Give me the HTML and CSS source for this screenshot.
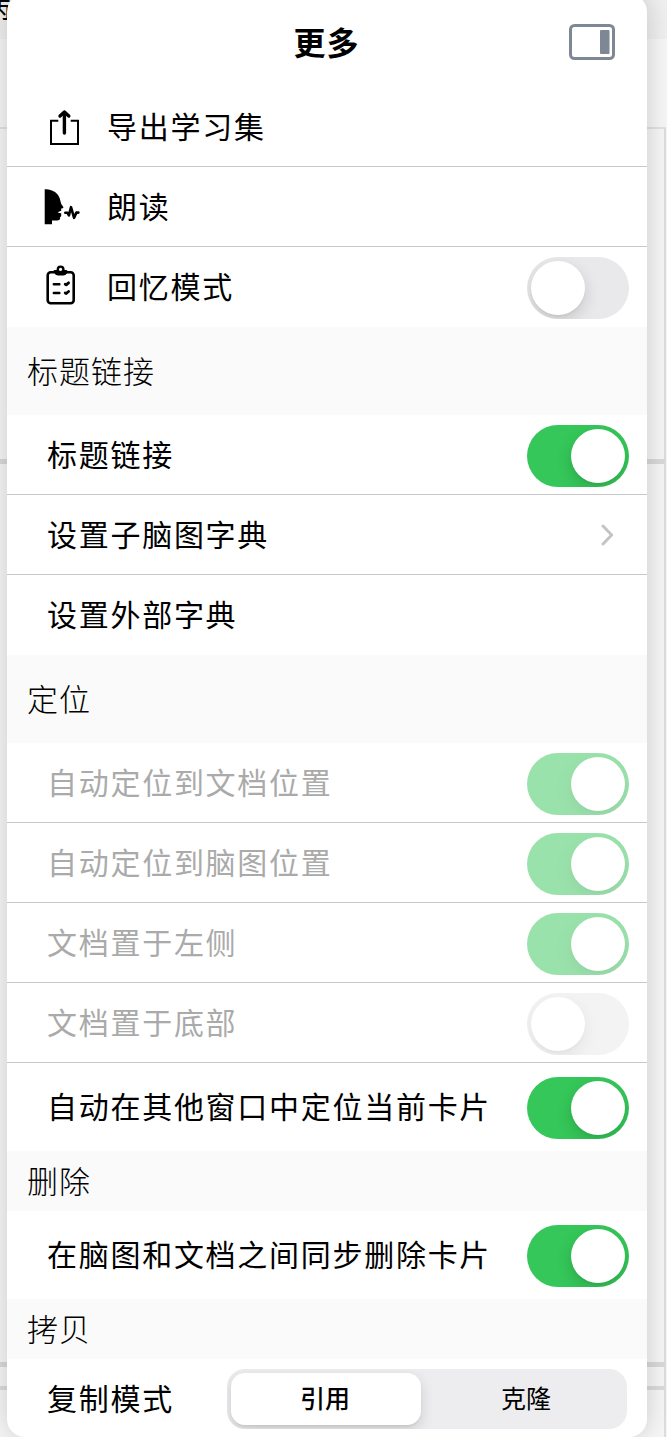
FILE: index.html
```html
<!DOCTYPE html>
<html lang="zh-CN">
<head>
<meta charset="utf-8">
<title>更多</title>
<link rel="stylesheet" href="styles.css">
</head>
<body>
<div class="screen">
  <div class="backdrop">
    <div class="bd-toolbar"><span class="bd-text">病</span></div>
    <div class="bd-tabs"></div>
    <div class="bd-page bd-page-first"></div>
    <div class="bd-page bd-page-main"></div>
    <div class="bd-page bd-page-gap"></div>
    <div class="bd-page bd-page-last"></div>
  </div>
  <main class="panel">
    <header class="header">
      <h1 class="title">更多</h1>
      <svg class="dock" width="46" height="36" viewBox="0 0 46 36"><rect x="1.5" y="1.5" width="43" height="33" rx="4" fill="none" stroke="#7e8796" stroke-width="3"/><rect x="31" y="6" width="9.5" height="24" rx="1" fill="#7e8796"/></svg>
    </header>

    <div class="row icon-row">
      <svg class="icon" width="40" height="40" viewBox="0 0 40 40" fill="none" stroke="#000"><path d="M15.3 13.7H8V37h27V13.7h-7.3" stroke-width="2"/><path d="M21.4 26V5.5" stroke-width="3.4" stroke-linecap="round"/><path d="M17 9l4.4-4 4.4 4" stroke-width="3.4" stroke-linecap="round" stroke-linejoin="round"/></svg>
      <span class="label">导出学习集</span>
    </div>
    <div class="row icon-row">
      <svg class="icon" width="40" height="40" viewBox="0 0 40 40"><path d="M1.7 2.3C10 1.8 16.5 7 17.4 14q.2 3 3.1 6.2-.2 1.2-2.3 1.4v2.2l-3.6 1.4q1.5 1 3.6 1.1v2.9l-1.2 1 .2 1.2q-.3 2.1-2.9 2.1H9V37.3H1.7z"/><path d="M22.3 25.8h2.2l1.4 2.6 2.1-8.2 3.1 10.6 2.3-5.2h2" fill="none" stroke="#000" stroke-width="2.6" stroke-linecap="round" stroke-linejoin="round"/></svg>
      <span class="label">朗读</span>
    </div>
    <div class="row icon-row last">
      <svg class="icon" width="40" height="40" viewBox="0 0 40 40" fill="none" stroke="#000" stroke-linecap="round" stroke-linejoin="round"><rect x="4.7" y="5.2" width="26" height="31" rx="3" stroke-width="2.6"/><path d="M11.5 3.5h12.3v1.7q-.6 2.8-3.2 2.8h-5.9q-2.6 0-3.2-2.8z" fill="#000" stroke-width="1"/><circle cx="17.6" cy="2.4" r="2.8" fill="#fff" stroke-width="2.4"/><path d="M10.8 17.3h5.6M10.8 26h5.6" stroke-width="2.4"/><path d="M22.2 17.3l1 .5 2.4-2M22.2 26l1 .5 2.4-2" stroke-width="2.8"/></svg>
      <span class="label">回忆模式</span>
      <span class="switch"><i class="knob"></i></span>
    </div>

    <h2 class="section">标题链接</h2>
    <div class="row"><span class="label">标题链接</span><span class="switch on"><i class="knob"></i></span></div>
    <div class="row"><span class="label">设置子脑图字典</span><svg class="chevron" width="16" height="24" viewBox="0 0 16 24"><path d="M3 3l8.7 9L3 21" fill="none" stroke="#c4c4c6" stroke-width="3" stroke-linecap="round" stroke-linejoin="round"/></svg></div>
    <div class="row last"><span class="label">设置外部字典</span></div>

    <h2 class="section">定位</h2>
    <div class="row disabled"><span class="label">自动定位到文档位置</span><span class="switch on"><i class="knob"></i></span></div>
    <div class="row disabled"><span class="label">自动定位到脑图位置</span><span class="switch on"><i class="knob"></i></span></div>
    <div class="row disabled"><span class="label">文档置于左侧</span><span class="switch on"><i class="knob"></i></span></div>
    <div class="row disabled"><span class="label">文档置于底部</span><span class="switch"><i class="knob"></i></span></div>
    <div class="row tall last"><span class="label">自动在其他窗口中定位当前卡片</span><span class="switch on"><i class="knob"></i></span></div>

    <h2 class="section compact">删除</h2>
    <div class="row tall last"><span class="label">在脑图和文档之间同步删除卡片</span><span class="switch on"><i class="knob"></i></span></div>

    <h2 class="section compact">拷贝</h2>
    <div class="row last copy-row">
      <span class="label">复制模式</span>
      <div class="segments"><span class="segment selected">引用</span><span class="segment other">克隆</span></div>
    </div>
  </main>
</div>
</body>
</html>
```

FILE: styles.css
```css
* { box-sizing: border-box; }

body {
  margin: 0;
  overflow: hidden;
  font-family: "Noto Sans CJK SC", sans-serif;
  color: #000;
}

.screen {
  display: grid;
  width: 667px;
  height: 1437px;
  overflow: hidden;
}

.backdrop, .panel { grid-area: 1 / 1; }

.backdrop {
  display: flex;
  flex-direction: column;
  background: #f7f7f7;
}

.bd-toolbar { height: 38px; background: #f0f0f0; overflow: hidden; }
.bd-text { display: block; margin: -18px 0 0 -19px; font-size: 30px; line-height: 44px; }
.bd-tabs { height: 89px; border-top: 1px solid #f0f0f0; }
.bd-page { margin-right: 1px; border-top: 2px solid #e2e2e2; border-right: 2px solid #dedede; }
.bd-page-first { height: 332px; }
.bd-page-main { height: 903px; border-top: 5px solid #dadada; }
.bd-page-gap { height: 24px; border-top: 5px solid #dadada; }
.bd-page-last { height: 51px; border-top: 4px solid #dcdcdc; }

.panel {
  width: 640px;
  height: 1443px;
  margin: -6px 0 0 7px;
  padding-top: 6px;
  border-radius: 18px;
  background: #fff;
  box-shadow: 0 0 28px rgba(0, 0, 0, 0.19);
  overflow: hidden;
}

.header {
  display: grid;
  grid-template-columns: 1fr auto 1fr;
  align-items: center;
  height: 87px;
  padding: 0 32px 3px;
}
.title {
  grid-column: 2;
  margin: 0;
  padding: 0 1px 2px 0;
  font-size: 32px;
  font-weight: 600;
  line-height: 44px;
  letter-spacing: 1px;
}
.dock { justify-self: end; }

.row {
  display: flex;
  align-items: center;
  justify-content: space-between;
  height: 80px;
  padding: 0 18px 0 40px;
  border-bottom: 1px solid #c8c8c8;
}
.row.last { border-bottom-color: transparent; }
.row.tall { height: 88px; }
.label {
  padding-bottom: 4px;
  font-size: 30px;
  letter-spacing: 1.72px;
  line-height: 44px;
  white-space: nowrap;
}
.icon-row { justify-content: flex-start; padding-left: 36px; }
.icon-row .label { margin-left: 24px; }
.icon-row .switch { margin-left: auto; }
.icon { flex: none; overflow: visible; }
.chevron { margin-right: 13px; }

.section {
  display: flex;
  align-items: center;
  height: 88px;
  margin: 0;
  padding: 0 20px 4px;
  background: #fafafa;
  font-size: 31px;
  font-weight: 300;
  letter-spacing: 1px;
}
.section.compact { height: 60px; padding-bottom: 3px; }

.switch {
  display: flex;
  flex: none;
  width: 102px;
  height: 62px;
  margin-top: 2px;
  padding: 4px;
  border-radius: 31px;
  background: #e9e9eb;
  overflow: hidden;
}
.switch.on { justify-content: flex-end; background: #35c759; }
.knob {
  width: 54px;
  height: 54px;
  border-radius: 50%;
  background: #fff;
  box-shadow: 0 6px 16px rgba(0, 0, 0, 0.15), 0 2px 2px rgba(0, 0, 0, 0.04);
}
.disabled .label { color: #aaa; }
.disabled .switch { opacity: 0.5; }

.copy-row { padding-right: 20px; }
.segments {
  display: grid;
  grid-template-columns: 190px 1fr;
  width: 400px;
  height: 60px;
  padding: 4px;
  border-radius: 18px;
  background: #ededf0;
  overflow: hidden;
}
.segment {
  display: flex;
  align-items: center;
  justify-content: center;
  padding-bottom: 3px;
  font-size: 25px;
  border-radius: 14px;
}
.other { padding-left: 8px; }
.selected {
  padding-right: 2px;
  background: #fff;
  font-weight: 500;
  box-shadow: 0 5px 14px rgba(0, 0, 0, 0.14), 0 2px 2px rgba(0, 0, 0, 0.05);
}
```
